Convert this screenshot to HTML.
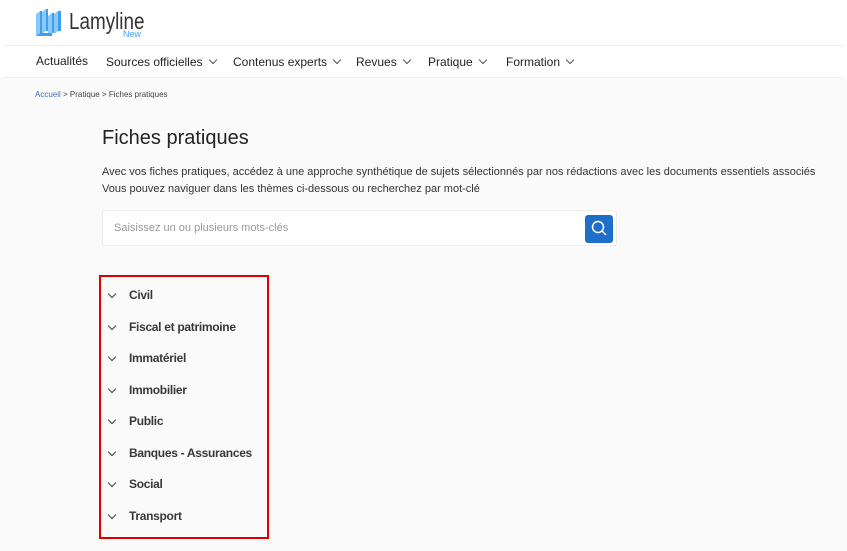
<!DOCTYPE html>
<html><head><meta charset="utf-8"><style>
*{margin:0;padding:0;box-sizing:border-box}
body{width:847px;height:551px;background:#fafafa;font-family:"Liberation Sans",Arial,sans-serif;color:#333;position:relative;overflow:hidden}
.hdr{position:absolute;left:0;top:0;width:847px;height:77px;background:#fff}
.l1{position:absolute;left:4px;right:4px;top:45px;border-top:1px solid #eee}
.l2{position:absolute;left:4px;right:4px;top:77px;border-top:1px solid #eee}
.logo{position:absolute;left:69px;top:8px;font-size:23px;color:#333;transform:scaleX(0.82);transform-origin:left top}
.new{position:absolute;left:123px;top:29px;font-size:9px;color:#4aa3f0}
.nav{position:absolute;top:54px;font-size:12px;color:#222}
.nav span.c{display:inline-block;width:6px;height:6px;border-right:1px solid #555;border-bottom:1px solid #555;transform:rotate(45deg);margin-left:7px;position:relative;top:-3px}
.bc{position:absolute;left:35px;top:90px;font-size:8px;color:#444}
.bc b{font-weight:normal;color:#3a73b8}
h1{position:absolute;left:102px;top:127px;font-size:20px;font-weight:normal;color:#222}
.p{position:absolute;left:102px;top:164px;font-size:11px;line-height:17px;color:#333}
.srch{position:absolute;left:102px;top:210px;width:515px;height:36px;background:#fff;border:1px solid #eee;border-radius:2px}
.srch .ph{position:absolute;left:11px;top:11px;font-size:11px;color:#999}
.btn{position:absolute;left:482px;top:4px;width:28px;height:28px;background:#1e6fc8;border-radius:3px}
.box{position:absolute;left:99px;top:275px;width:170px;height:264px;border:2px solid #e00000}
.it{position:absolute;left:129px;font-size:12px;font-weight:bold;color:#383838;letter-spacing:-0.3px}
.ch{position:absolute;left:109px;width:6px;height:6px;border-right:1.2px solid #444;border-bottom:1.2px solid #444;transform:rotate(45deg)}
</style></head><body>
<div class="hdr"></div><div class="l1"></div><div class="l2"></div>
<svg style="position:absolute;left:34px;top:5px" width="30" height="32" viewBox="0 0 30 32">
<g fill="#8cc8f7"><path d="M2 9l4-3v22l-4 3z"/><path d="M8 7l4-3v22l-4 3z"/><path d="M14 11l4-3v20l-4 3z"/><path d="M20 9l4-3v20l-4 3z"/></g>
<g fill="#3d9ef0"><path d="M6 6h2v22H6z"/><path d="M12 4h2v22h-2z"/><path d="M18 8h2v20h-2z"/><path d="M24 6h3v20h-3z"/><path d="M6 28h12v3H2z"/></g></svg>
<div class="logo">Lamyline</div><div class="new">New</div>
<div class="nav" style="left:36px">Actualités</div>
<div class="nav" style="left:106px;top:55px">Sources officielles<span class="c"></span></div>
<div class="nav" style="left:233px;top:55px">Contenus experts<span class="c"></span></div>
<div class="nav" style="left:356px;top:55px">Revues<span class="c"></span></div>
<div class="nav" style="left:428px;top:55px">Pratique<span class="c"></span></div>
<div class="nav" style="left:506px;top:55px">Formation<span class="c"></span></div>
<div class="bc"><b>Accueil</b> &gt; Pratique &gt; Fiches pratiques</div>
<h1>Fiches pratiques</h1>
<div class="p">Avec vos fiches pratiques, accédez à une approche synthétique de sujets sélectionnés par nos rédactions avec les documents essentiels associés<br>Vous pouvez naviguer dans les thèmes ci-dessous ou recherchez par mot-clé</div>
<div class="srch"><div class="ph">Saisissez un ou plusieurs mots-clés</div><div class="btn"><svg width="28" height="28"><circle cx="13" cy="12" r="5.5" fill="none" stroke="#fff" stroke-width="1.5"/><path d="M17 16l4 4" stroke="#fff" stroke-width="1.5"/></svg></div></div>
<div class="box"></div>
<div class="ch" style="top:291px"></div><div class="it" style="top:288px">Civil</div>
<div class="ch" style="top:323px"></div><div class="it" style="top:320px">Fiscal et patrimoine</div>
<div class="ch" style="top:354px"></div><div class="it" style="top:351px">Immatériel</div>
<div class="ch" style="top:386px"></div><div class="it" style="top:383px">Immobilier</div>
<div class="ch" style="top:417px"></div><div class="it" style="top:414px">Public</div>
<div class="ch" style="top:449px"></div><div class="it" style="top:446px">Banques - Assurances</div>
<div class="ch" style="top:480px"></div><div class="it" style="top:477px">Social</div>
<div class="ch" style="top:512px"></div><div class="it" style="top:509px">Transport</div>
</body></html>
